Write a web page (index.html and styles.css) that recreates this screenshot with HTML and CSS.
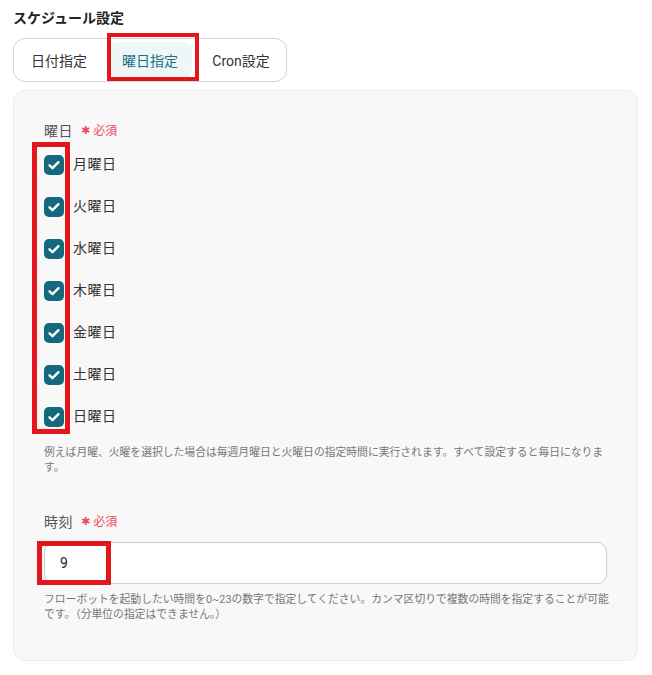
FILE: index.html
```html
<!DOCTYPE html>
<html lang="ja">
<head>
<meta charset="utf-8">
<link rel="stylesheet" href="styles.css">
</head>
<body>
<div class="page">
  <h2 class="title">スケジュール設定</h2>
  <div class="tabs">
    <div class="tab">日付指定</div>
    <div class="tab active">曜日指定<span class="mark mark-tab"></span></div>
    <div class="tab">Cron設定</div>
  </div>
  <div class="panel">
    <div class="field">
      <div class="label">曜日<span class="req"><span class="star">✱</span>必須</span></div>
      <div class="checks">
        <span class="mark mark-checks"></span>
        <div class="check"><span class="box"><svg viewBox="0 0 20 20"><path d="M5.5 10.3l3 2.9 6-6" /></svg></span><span class="txt">月曜日</span></div>
        <div class="check"><span class="box"><svg viewBox="0 0 20 20"><path d="M5.5 10.3l3 2.9 6-6" /></svg></span><span class="txt">火曜日</span></div>
        <div class="check"><span class="box"><svg viewBox="0 0 20 20"><path d="M5.5 10.3l3 2.9 6-6" /></svg></span><span class="txt">水曜日</span></div>
        <div class="check"><span class="box"><svg viewBox="0 0 20 20"><path d="M5.5 10.3l3 2.9 6-6" /></svg></span><span class="txt">木曜日</span></div>
        <div class="check"><span class="box"><svg viewBox="0 0 20 20"><path d="M5.5 10.3l3 2.9 6-6" /></svg></span><span class="txt">金曜日</span></div>
        <div class="check"><span class="box"><svg viewBox="0 0 20 20"><path d="M5.5 10.3l3 2.9 6-6" /></svg></span><span class="txt">土曜日</span></div>
        <div class="check"><span class="box"><svg viewBox="0 0 20 20"><path d="M5.5 10.3l3 2.9 6-6" /></svg></span><span class="txt">日曜日</span></div>
      </div>
      <p class="help">例えば月曜、火曜を選択した場合は毎週月曜日と火曜日の指定時間に実行されます。すべて設定すると毎日になりま<br>す。</p>
    </div>
    <div class="field field-time">
      <div class="label">時刻<span class="req"><span class="star">✱</span>必須</span></div>
      <div class="input">9<span class="mark mark-input"></span></div>
      <p class="help">フローボットを起動したい時間を0~23の数字で指定してください。カンマ区切りで複数の時間を指定することが可能<br>です。（分単位の指定はできません。）</p>
    </div>
  </div>
</div>
</body>
</html>
```

FILE: styles.css
```css
* { box-sizing: border-box; }
html, body { margin: 0; background: #fff; }
body {
  font-family: Roboto, "Noto Sans CJK JP", sans-serif;
  color: #333;
}
.page {
  padding: 8px 14px 0 13px;
}
.title {
  margin: 0;
  font-size: 14px;
  line-height: 20px;
  font-weight: 700;
  color: #222;
}
.tabs {
  margin-top: 10px;
  display: inline-flex;
  gap: 7px;
  padding: 3px;
  border: 1px solid #d4d4d4;
  border-radius: 12px;
  background: #fff;
}
.tab {
  position: relative;
  width: 84px;
  height: 36px;
  display: flex;
  align-items: center;
  justify-content: center;
  font-size: 14px;
  color: #333;
  border-radius: 9px;
}
.tab.active {
  background: #eef7f8;
  color: #1e6f83;
}
.mark {
  position: absolute;
  border: 5px solid #e3151d;
  pointer-events: none;
}
.mark-tab {
  left: -1px;
  right: -7px;
  top: -9px;
  bottom: -3px;
  border-width: 4px;
}
.panel {
  margin-top: 8px;
  background: #f8f8f8;
  border: 1px solid #ececec;
  border-radius: 12px;
  padding: 30px 30px 38px 30px;
}
.label {
  display: flex;
  align-items: center;
  font-size: 14px;
  line-height: 20px;
  color: #555;
  letter-spacing: 0.5px;
}
.req {
  margin-left: 8px;
  font-size: 12px;
  color: #ec4b62;
  display: inline-flex;
  align-items: center;
  letter-spacing: 0;
}
.star {
  font-family: "DejaVu Sans", sans-serif;
  font-size: 11px;
  margin-right: 3px;
}
.checks {
  position: relative;
  margin-top: 14px;
  display: flex;
  flex-direction: column;
  gap: 22px;
}
.mark-checks {
  left: -12px;
  top: -13px;
  width: 38px;
  height: 292px;
}
.check {
  display: flex;
  align-items: center;
  height: 20px;
  font-size: 14px;
  color: #333;
  letter-spacing: 0.5px;
}
.txt {
  margin-bottom: 5px;
}
.box {
  width: 20px;
  height: 20px;
  border-radius: 5px;
  background: #13697e;
  margin-right: 9px;
  display: flex;
}
.box svg {
  width: 20px;
  height: 20px;
  fill: none;
  stroke: #fff;
  stroke-width: 2.4;
  stroke-linecap: round;
  stroke-linejoin: round;
}
.help {
  margin: 18px 0 0;
  font-size: 10.8px;
  line-height: 15px;
  color: #777;
  white-space: nowrap;
}
.field-time {
  margin-top: 37px;
}
.field-time .input {
  position: relative;
  margin-top: 10px;
  height: 42px;
  background: #fff;
  border: 1px solid #cfcfcf;
  border-radius: 10px;
  padding-left: 15px;
  display: flex;
  align-items: center;
  font-size: 14px;
  color: #222;
}
.mark-input {
  left: -8px;
  top: -2px;
  width: 74px;
  height: 44px;
}
.field-time .help {
  margin-top: 8px;
}
```
